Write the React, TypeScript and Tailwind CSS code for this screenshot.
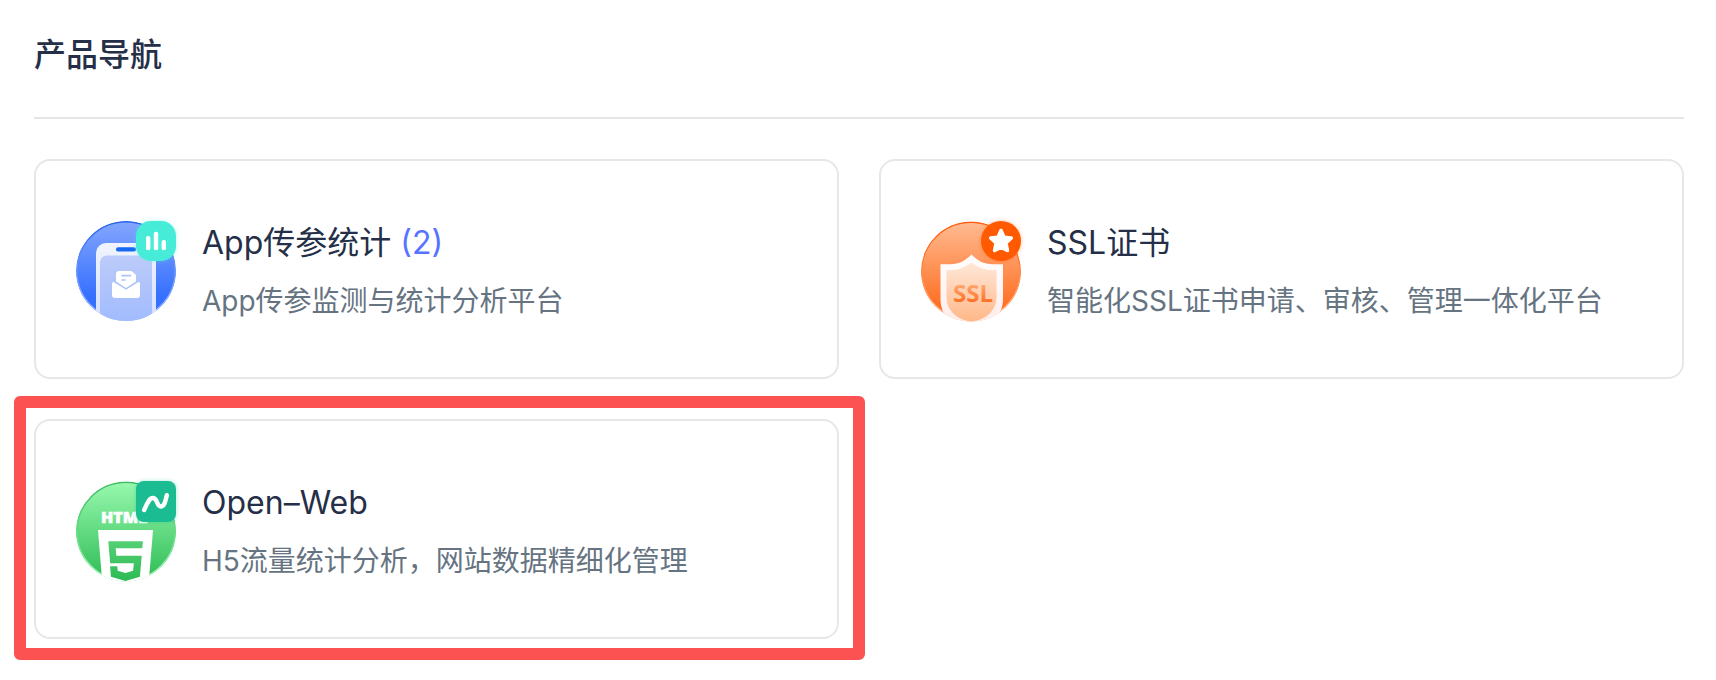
import React from 'react'

interface Product {
  title: string
  count?: number
  description: string
  icon: React.FC
  highlighted?: boolean
}

const AppStatsIcon: React.FC = () => (
  <svg viewBox="0 0 100 100" className="h-[100px] w-[100px] shrink-0 overflow-visible" aria-hidden="true">
    <defs>
      <linearGradient id="app-bg" x1="0" y1="0" x2="0" y2="1">
        <stop offset="0" stopColor="#84a6fd" />
        <stop offset="0.75" stopColor="#3670ff" />
        <stop offset="1" stopColor="#3670ff" />
      </linearGradient>
      <linearGradient id="app-ring" x1="0" y1="0" x2="0" y2="1">
        <stop offset="0" stopColor="#2563eb" />
        <stop offset="0.5" stopColor="#6f98fb" />
        <stop offset="1" stopColor="#a9c2ff" />
      </linearGradient>
      <linearGradient id="app-phone" x1="0" y1="0" x2="0" y2="1">
        <stop offset="0" stopColor="#f1f4ff" />
        <stop offset="1" stopColor="#cfdcff" />
      </linearGradient>
      <linearGradient id="app-screen" x1="0" y1="0" x2="0" y2="1">
        <stop offset="0" stopColor="#bccbf9" />
        <stop offset="1" stopColor="#9bb8ff" />
      </linearGradient>
      <clipPath id="app-clip">
        <circle cx="50" cy="50" r="50" />
      </clipPath>
      <filter id="app-glow" x="-30%" y="-30%" width="160%" height="160%">
        <feDropShadow dx="0" dy="0" stdDeviation="2" floodColor="#46ecd8" floodOpacity="0.4" />
      </filter>
    </defs>
    <g clipPath="url(#app-clip)">
      <circle cx="50" cy="50" r="50" fill="url(#app-bg)" />
      <circle cx="50" cy="50" r="49.25" fill="none" stroke="url(#app-ring)" strokeWidth="1.5" />
      <rect x="20" y="22" width="60" height="90" rx="10" fill="url(#app-phone)" />
      <rect x="24" y="34.5" width="52" height="80" rx="7" fill="url(#app-screen)" />
      <rect x="40" y="26.3" width="20" height="4.2" rx="2.1" fill="#1768f0" />
    </g>
    <path d="M43 50h12.5l4.5 4v12l-10 6-10-6V53a3 3 0 0 1 3-3z" fill="#fff" />
    <path d="M46 54.6h8.5M46 59h3" stroke="#aec2fb" strokeWidth="1.6" strokeLinecap="round" />
    <path
      d="M38.3 61.2 50 68.6l11.7-7.4c1.2-.5 2.3.3 2.3 1.8V74a3 3 0 0 1-3 3H39a3 3 0 0 1-3-3V63c0-1.5 1.1-2.3 2.3-1.8z"
      fill="#fff"
    />
    <path d="M38.5 60.5 50 67.8l11.5-7.3" fill="none" stroke="#aec2fb" strokeWidth="1.5" />
    <rect x="60" width="40" height="40" rx="15" fill="#46ecd8" filter="url(#app-glow)" />
    <rect x="70" y="15" width="4.4" height="14.3" rx="2" fill="#fff" />
    <rect x="77.8" y="10.8" width="4.4" height="18.5" rx="2" fill="#fff" />
    <rect x="85.6" y="19" width="4.4" height="10.3" rx="2" fill="#fff" />
  </svg>
)

const SslIcon: React.FC = () => (
  <svg viewBox="0 0 100 100" className="h-[100px] w-[100px] shrink-0 overflow-visible" aria-hidden="true">
    <defs>
      <linearGradient id="ssl-bg" x1="0" y1="0" x2="0" y2="1">
        <stop offset="0" stopColor="#ffbb92" />
        <stop offset="0.9" stopColor="#ff6a1c" />
      </linearGradient>
      <linearGradient id="ssl-ring" x1="0" y1="0" x2="0" y2="1">
        <stop offset="0" stopColor="#ff5c0c" />
        <stop offset="0.4" stopColor="#ff7a35" />
        <stop offset="1" stopColor="#ffc9a8" />
      </linearGradient>
      <linearGradient id="ssl-shield" x1="0" y1="0" x2="0" y2="1">
        <stop offset="0" stopColor="#ffffff" />
        <stop offset="1" stopColor="#ffeae8" />
      </linearGradient>
      <linearGradient id="ssl-inner" x1="0" y1="0" x2="0" y2="1">
        <stop offset="0" stopColor="#ffe8d8" />
        <stop offset="1" stopColor="#ffb788" />
      </linearGradient>
      <linearGradient id="ssl-text" x1="0" y1="0" x2="0" y2="1">
        <stop offset="0.25" stopColor="#ffa870" />
        <stop offset="0.8" stopColor="#fd6f25" />
      </linearGradient>
      <clipPath id="ssl-clip">
        <circle cx="50" cy="50.5" r="50" />
      </clipPath>
      <filter id="ssl-glow" x="-30%" y="-30%" width="160%" height="160%">
        <feDropShadow dx="0" dy="0" stdDeviation="2" floodColor="#ff5a00" floodOpacity="0.4" />
      </filter>
    </defs>
    <g clipPath="url(#ssl-clip)">
      <circle cx="50" cy="50.5" r="50" fill="url(#ssl-bg)" />
      <circle cx="50" cy="50.5" r="49.3" fill="none" stroke="url(#ssl-ring)" strokeWidth="1.4" />
      <path
        d="M50.5 33.5c6 6 12 9.8 21 9.8H82V78c0 16-10 26-31.5 30C29 104 19.5 94 19.5 78V43.3h10c9 0 15-3.8 21-9.8z"
        fill="url(#ssl-shield)"
      />
      <path
        d="M50.5 41.5c7 5 13 7.5 20 7.5h5v27c0 13-9 22-25 25-16-3-25-12-25-25V49h5c7 0 13-2.5 20-7.5z"
        fill="url(#ssl-inner)"
      />
    </g>
    <text x="52" y="81" textAnchor="middle" className="font-['Open_Sans'] text-[24px] font-bold" fill="url(#ssl-text)">
      SSL
    </text>
    <circle cx="80" cy="20" r="20" fill="#ff5a00" filter="url(#ssl-glow)" />
    <path
      d="M80 9.5l3 6.7 7.3.8-5.4 5 1.5 7.5-6.4-3.4-6.4 3.4 1.5-7.5-5.4-5 7.3-.8z"
      fill="#fff"
      stroke="#fff"
      strokeWidth="3.6"
      strokeLinejoin="round"
    />
  </svg>
)

const OpenWebIcon: React.FC = () => (
  <svg viewBox="0 0 100 100" className="h-[100px] w-[100px] shrink-0 overflow-visible" aria-hidden="true">
    <defs>
      <linearGradient id="web-bg" x1="0" y1="0" x2="0" y2="1">
        <stop offset="0" stopColor="#98f9ae" />
        <stop offset="1" stopColor="#2dbb55" />
      </linearGradient>
      <linearGradient id="web-ring" x1="0" y1="0" x2="0" y2="1">
        <stop offset="0" stopColor="#3cb962" />
        <stop offset="0.5" stopColor="#68d986" />
        <stop offset="1" stopColor="#b0f8c1" />
      </linearGradient>
      <linearGradient id="web-five" gradientUnits="userSpaceOnUse" x1="0" y1="60" x2="0" y2="100">
        <stop offset="0" stopColor="#55cf75" />
        <stop offset="1" stopColor="#2dbb55" />
      </linearGradient>
      <clipPath id="web-clip">
        <circle cx="50" cy="50.5" r="50" />
      </clipPath>
      <filter id="web-glow" x="-30%" y="-30%" width="160%" height="160%">
        <feDropShadow dx="0" dy="0" stdDeviation="2" floodColor="#1abc93" floodOpacity="0.35" />
      </filter>
    </defs>
    <g clipPath="url(#web-clip)">
      <circle cx="50" cy="50.5" r="50" fill="url(#web-bg)" />
      <circle cx="50" cy="50.5" r="49.2" fill="none" stroke="url(#web-ring)" strokeWidth="1.6" />
      <path d="M22 49h55l-4.5 55h-46z" fill="#fff" />
    </g>
    <path
      d="M32.3 60.3h34.6l-.6 7H39.7l.6 7.4h25.4l-1.8 21-14.5 4.3-14.5-4.3-.8-10.5h7.2l.4 4.6 7.7 2.2 7.7-2.2.7-7.5H34.2z"
      fill="url(#web-five)"
    />
    <text x="25" y="42" className="font-['Open_Sans'] text-[16px] font-extrabold" fill="#fff" stroke="#fff" strokeWidth="0.6">
      HTML
    </text>
    <rect x="60" width="40" height="41" rx="8" fill="#1abc93" filter="url(#web-glow)" />
    <path
      d="M68.2 29c2.3-5 4.8-12 8.6-12 5 0 3.7 8.5 8 8.5 3.8 0 4.8-6 6-11.3"
      fill="none"
      stroke="#fff"
      strokeWidth="4.4"
      strokeLinecap="round"
    />
  </svg>
)

const products: Product[] = [
  {
    title: 'App传参统计',
    count: 2,
    description: 'App传参监测与统计分析平台',
    icon: AppStatsIcon
  },
  {
    title: 'SSL证书',
    description: '智能化SSL证书申请、审核、管理一体化平台',
    icon: SslIcon
  },
  {
    title: 'Open–Web',
    description: 'H5流量统计分析，网站数据精细化管理',
    icon: OpenWebIcon,
    highlighted: true
  }
]

const ProductCard: React.FC<{ product: Product }> = ({ product }) => {
  const Icon = product.icon
  return (
    <div className="relative">
      <a href="#" className="flex gap-[26px] rounded-2xl border-2 border-[#e7e7e7] px-10 pt-[60px] pb-14">
        <Icon />
        <div className="min-w-0 flex-1">
          <h2 className="text-[32px] leading-[44px] text-[#252f47]">
            {product.title}
            {product.count !== undefined && <span className="text-[#5873ff]"> ({product.count})</span>}
          </h2>
          <p className="mt-4 text-[28px] leading-10 text-[#667482]">{product.description}</p>
        </div>
      </a>
      {product.highlighted && (
        <div className="pointer-events-none absolute -top-[23px] -right-[26px] -bottom-[21px] -left-5 rounded-md border-12 border-[#fc5252]" />
      )}
    </div>
  )
}

export default function App() {
  return (
    <main className="bg-white pr-8 pb-10 pl-[34px] font-[Inter,'Noto_Sans_CJK_SC',sans-serif]">
      <header className="border-b-2 border-[#e5e5e5] pt-[31px] pb-[38px]">
        <h1 className="text-[32px] leading-[48px] font-medium text-[#252f47]">产品导航</h1>
      </header>
      <div className="mt-10 grid grid-cols-2 gap-10">
        {products.map((product) => (
          <ProductCard key={product.title} product={product} />
        ))}
      </div>
    </main>
  )
}
